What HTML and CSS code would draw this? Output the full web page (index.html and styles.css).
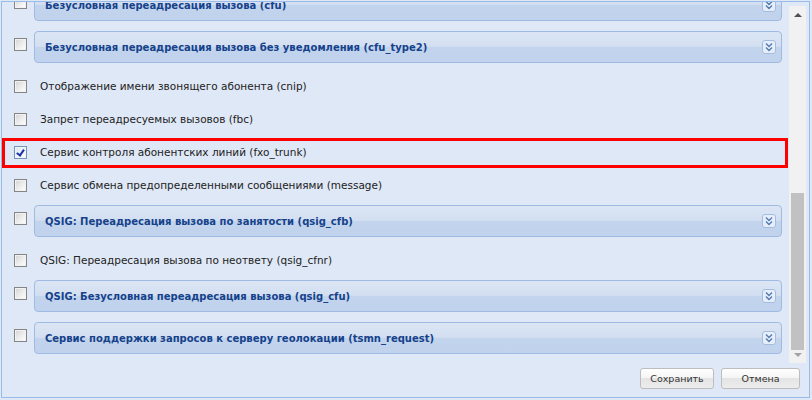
FILE: index.html
```html
<!DOCTYPE html>
<html>
<head>
<meta charset="utf-8">
<link rel="stylesheet" href="styles.css">
</head>
<body>
<div class="window">
  <div class="panel">
    <div class="scroll">
      <div class="list">
        <div class="item group first">
          <span class="cb"></span>
          <div class="fs"><span class="fs-title">Безусловная переадресация вызова (cfu)</span><span class="tgl"></span></div>
        </div>
        <div class="item group">
          <span class="cb"></span>
          <div class="fs"><span class="fs-title">Безусловная переадресация вызова без уведомления (cfu_type2)</span><span class="tgl"></span></div>
        </div>
        <div class="item plain">
          <span class="cb"></span>
          <span class="lbl">Отображение имени звонящего абонента (cnip)</span>
        </div>
        <div class="item plain">
          <span class="cb"></span>
          <span class="lbl">Запрет переадресуемых вызовов (fbc)</span>
        </div>
        <div class="item plain marked">
          <span class="cb checked"></span>
          <span class="lbl">Сервис контроля абонентских линий (fxo_trunk)</span>
        </div>
        <div class="item plain">
          <span class="cb"></span>
          <span class="lbl">Сервис обмена предопределенными сообщениями (message)</span>
        </div>
        <div class="item group">
          <span class="cb"></span>
          <div class="fs"><span class="fs-title">QSIG: Переадресация вызова по занятости (qsig_cfb)</span><span class="tgl"></span></div>
        </div>
        <div class="item plain">
          <span class="cb"></span>
          <span class="lbl">QSIG: Переадресация вызова по неответу (qsig_cfnr)</span>
        </div>
        <div class="item group">
          <span class="cb"></span>
          <div class="fs"><span class="fs-title">QSIG: Безусловная переадресация вызова (qsig_cfu)</span><span class="tgl"></span></div>
        </div>
        <div class="item group">
          <span class="cb"></span>
          <div class="fs"><span class="fs-title">Сервис поддержки запросов к серверу геолокации (tsmn_request)</span><span class="tgl"></span></div>
        </div>
      </div>
      <div class="scrollbar">
        <span class="arrow up"></span>
        <div class="track"><span class="thumb"></span></div>
        <span class="arrow down"></span>
      </div>
    </div>
    <div class="footer">
      <button class="btn save">Сохранить</button>
      <button class="btn cancel">Отмена</button>
    </div>
  </div>
</div>
</body>
</html>
```
FILE: styles.css
```css
* { box-sizing: border-box; }
html, body { margin: 0; padding: 0; }
body {
  width: 812px;
  height: 400px;
  overflow: hidden;
  background: #dfe8f6;
  font-family: "DejaVu Sans", Verdana, sans-serif;
}
.window {
  width: 812px;
  height: 400px;
  padding: 1px 0 0 1px;
}
.panel {
  width: 809px;
  height: 397px;
  border: 1px solid #99bbe8;
  background: #dfe8f6;
  display: flex;
  flex-direction: column;
}
.scroll {
  height: 361px;
  display: flex;
  padding-right: 3px;
}
.list {
  flex: 1;
  overflow: hidden;
  display: flex;
  flex-direction: column;
}
.item {
  display: flex;
  flex: none;
  padding-left: 12px;
  padding-right: 7px;
  position: relative;
}
.item.group { height: 32px; margin-bottom: 10px; align-items: flex-start; }
.item.group .cb { margin-top: 7px; }
.item.first { margin-top: -13px; }
.item.plain { height: 26px; margin-bottom: 7px; align-items: center; }
.item.marked::after {
  content: "";
  position: absolute;
  left: 0;
  right: 1px;
  top: -1px;
  bottom: -3px;
  border: 3px solid #ff0000;
}
.cb {
  flex: none;
  width: 13px;
  height: 13px;
  border: 1px solid #858585;
  background: linear-gradient(135deg, #d3d3d3 0%, #eeeeee 55%, #ffffff 100%);
  box-shadow: inset 0 0 0 1px #f2f2f2;
  position: relative;
}
.cb.checked {
  border-color: #7394bb;
  background: linear-gradient(135deg, #dde6f0 0%, #f3f6fa 60%, #ffffff 100%);
}
.cb.checked::after {
  content: "";
  position: absolute;
  left: 3px;
  top: 1px;
  width: 3px;
  height: 6px;
  border-right: 2px solid #1b33a6;
  border-bottom: 2px solid #1b33a6;
  transform: rotate(35deg);
}
.lbl {
  margin-left: 13px;
  font-size: 10.5px;
  color: #222;
  white-space: nowrap;
}
.fs {
  margin-left: 7px;
  flex: 1;
  height: 32px;
  border: 1px solid #9fbbe3;
  border-radius: 4px;
  background: linear-gradient(#dbe5f4 0%, #d3dff1 48%, #c3d5ed 50%, #c0d2ec 100%);
  display: flex;
  align-items: center;
  padding: 0 5px 0 10px;
}
.fs-title {
  flex: 1;
  font-size: 10px;
  font-weight: bold;
  color: #15428b;
  white-space: nowrap;
}
.tgl {
  flex: none;
  width: 14px;
  height: 14px;
  border: 1px solid #a3bde2;
  border-radius: 3px;
  background-color: #e6eef9;
  background-image: url("data:image/svg+xml;utf8,<svg xmlns='http://www.w3.org/2000/svg' width='12' height='12' viewBox='0 0 12 12'><path d='M3 2.5 L6 5.5 L9 2.5 M3 6.5 L6 9.5 L9 6.5' fill='none' stroke='%23547bb3' stroke-width='1.4'/></svg>");
  background-repeat: no-repeat;
  background-position: center;
}
.scrollbar {
  flex: none;
  width: 17px;
  margin-top: 4px;
  background: #f1f1f1;
  display: flex;
  flex-direction: column;
  align-items: center;
}
.arrow {
  flex: none;
  width: 0;
  height: 0;
  border-left: 4px solid transparent;
  border-right: 4px solid transparent;
}
.arrow.up { border-bottom: 4px solid #505050; margin-top: 7px; margin-bottom: 8px; }
.arrow.down { border-top: 4px solid #a3a3a3; margin-top: 3px; margin-bottom: 6px; }
.track {
  flex: 1;
  width: 100%;
  display: flex;
  flex-direction: column;
  justify-content: flex-end;
  align-items: center;
}
.thumb {
  width: 13px;
  height: 157px;
  background: #c1c1c1;
}
.footer {
  flex: 1;
  display: flex;
  justify-content: flex-end;
  align-items: flex-start;
  padding: 5px 9px 0 0;
  gap: 7px;
}
.btn {
  height: 21px;
  border: 1px solid #bdbdbd;
  border-radius: 3px;
  background: linear-gradient(#ffffff 0%, #f5f5f5 45%, #e4e4e4 50%, #ececec 100%);
  font-family: "DejaVu Sans", Verdana, sans-serif;
  font-size: 9.5px;
  color: #333;
  padding: 0;
}
.btn.save { width: 74px; }
.btn.cancel { width: 79px; }
```
